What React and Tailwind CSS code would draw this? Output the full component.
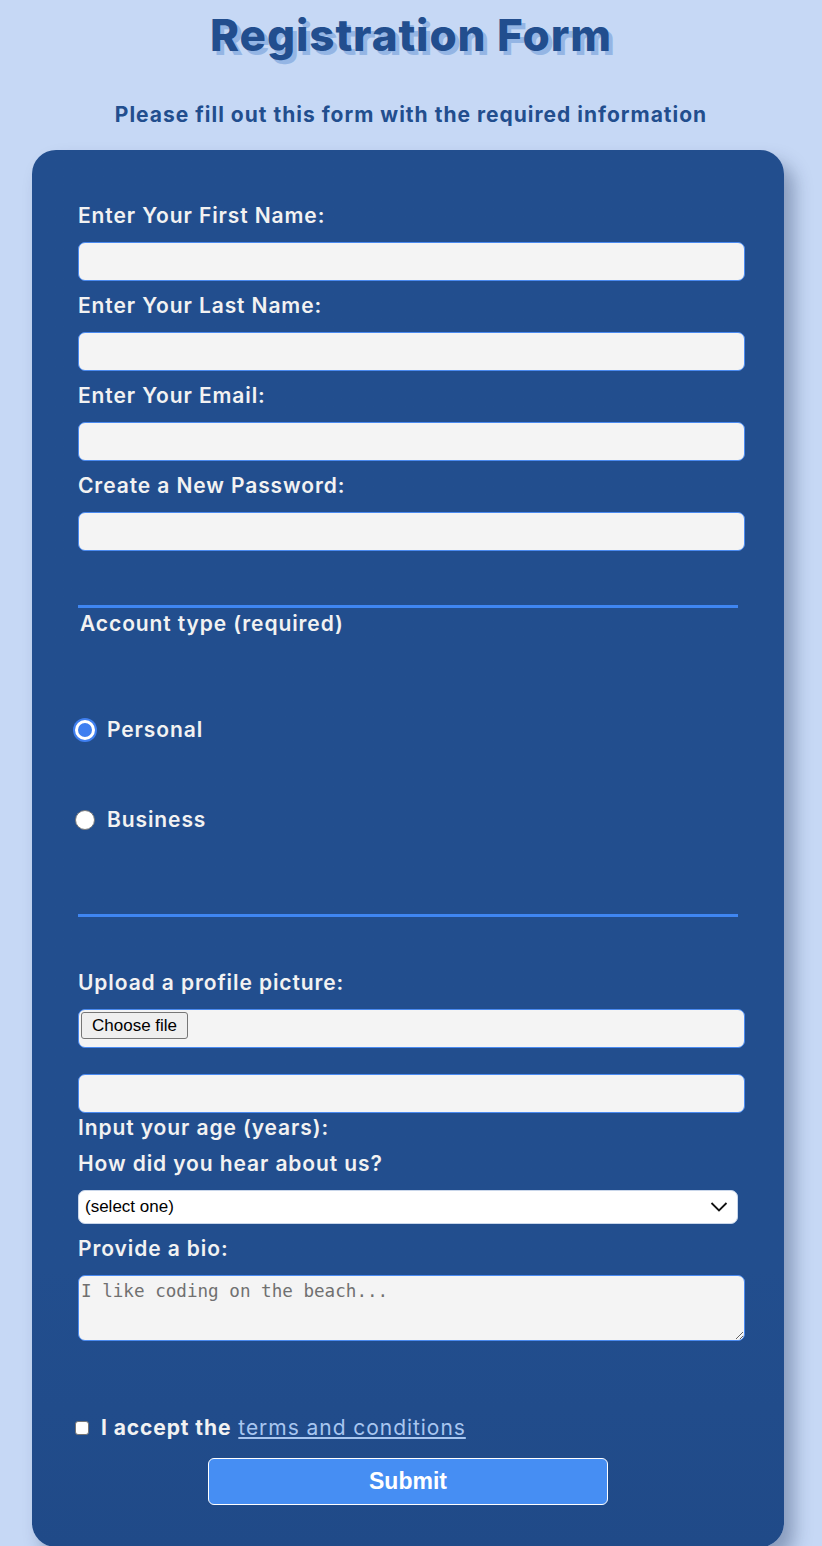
import { useState } from "react";

const font = { fontFamily: "Inter, 'Open Sans', sans-serif" };
const labelCls = "block leading-6 text-[21px] font-semibold text-[#f2f2f2] tracking-[0.9px]";
const boxCls = "block w-[667px] h-[39px] rounded-[7px] bg-[#f4f4f4] border border-[#4a8af0] outline-none px-2";

function Field({ label, type = "text" }) {
  return (
    <div>
      <label className={labelCls + " mt-[13px]"}>{label}</label>
      <input type={type} className={boxCls + " mt-[14px]"} />
    </div>
  );
}

function Radio({ checked, onClick }) {
  return (
    <button
      type="button"
      onClick={onClick}
      className={
        checked
          ? "w-[20px] h-[20px] rounded-full bg-[#3f7ff0] border-[3px] border-white ring-2 ring-[#3f7ff0]"
          : "w-[20px] h-[20px] rounded-full bg-white border-[1.5px] border-[#7a7a7a]"
      }
    />
  );
}

export default function App() {
  const [account, setAccount] = useState("personal");

  return (
    <div className="min-h-[1546px] bg-[#c6d8f5] flex flex-col items-center" style={font}>
      <h1 className="mt-[8px] text-[44px] leading-[54px] font-extrabold text-[#224e8e] tracking-[0.9px] [text-shadow:4px_4px_0_#94b5e4]">
        Registration Form
      </h1>
      <p className="mt-[41px] text-[21px] leading-6 font-bold text-[#224e8e] tracking-[1px]">
        Please fill out this form with the required information
      </p>

      <form
        onSubmit={(e) => e.preventDefault()}
        className="mt-[23px] w-[752px] self-start ml-[32px] bg-gradient-to-b from-[#224e8e] from-80% to-[#204a88] rounded-[24px] pl-[46px] pr-[39px] pt-[41px] pb-[42px] shadow-[10px_12px_18px_rgba(20,40,80,0.35)]"
      >
        <Field label="Enter Your First Name:" />
        <Field label="Enter Your Last Name:" />
        <Field label="Enter Your Email:" />
        <Field label="Create a New Password:" type="password" />

        <div className="mt-[54px] w-[660px] border-t-[3px] border-b-[3px] border-[#3f86f2]">
          <p className={labelCls + " ml-[2px] mt-[4px]"}>Account type (required)</p>
          <div className="mt-[82px] flex items-center gap-[12px] -ml-[3px] h-6">
            <Radio checked={account === "personal"} onClick={() => setAccount("personal")} />
            <span className="text-[21px] font-semibold text-[#f2f2f2] tracking-[0.9px]">Personal</span>
          </div>
          <div className="mt-[66px] flex items-center gap-[12px] -ml-[3px] h-6">
            <Radio checked={account === "business"} onClick={() => setAccount("business")} />
            <span className="text-[21px] font-semibold text-[#f2f2f2] tracking-[0.9px]">Business</span>
          </div>
          <div className="h-[82px]" />
        </div>

        <label className={labelCls + " mt-[54px]"}>Upload a profile picture:</label>
        <div className="mt-[14px] w-[667px] h-[39px] rounded-[7px] bg-[#f4f4f4] border border-[#4a8af0] flex items-start pt-[2px] pl-[2px]">
          <button
            type="button"
            className="h-[27px] px-[10px] bg-[#efefef] border border-[#767676] rounded-[3px] text-[17px] text-black leading-none"
            style={{ fontFamily: "'Liberation Sans', Arial, sans-serif" }}
          >
            Choose file
          </button>
        </div>

        <input type="number" className={boxCls + " mt-[26px]"} />
        <label className={labelCls + " mt-[3px]"}>Input your age (years):</label>
        <label className={labelCls + " mt-[12px]"}>How did you hear about us?</label>
        <div className="relative mt-[14px] w-[660px]">
          <select
            className="appearance-none block w-full h-[34px] rounded-[7px] bg-white border border-[#c9d6ea] px-[6px] text-[17px] text-black outline-none"
            style={{ fontFamily: "'Liberation Sans', Arial, sans-serif" }}
            defaultValue=""
          >
            <option value="">(select one)</option>
            <option>Friend</option>
            <option>Search engine</option>
            <option>Social media</option>
          </select>
          <svg className="absolute right-[10px] top-[11px] pointer-events-none" width="18" height="12" viewBox="0 0 18 12" fill="none">
            <path d="M1.5 2 L9 9.5 L16.5 2" stroke="#111" strokeWidth="1.8" />
          </svg>
        </div>

        <label className={labelCls + " mt-[13px]"}>Provide a bio:</label>
        <textarea
          placeholder="I like coding on the beach..."
          className="mt-[14px] block w-[667px] h-[66px] rounded-[7px] bg-[#f4f4f4] border border-[#4a8af0] outline-none px-[2px] py-[2px] placeholder:text-[#707070]"
          style={{ fontFamily: "'DejaVu Sans Mono', monospace", fontSize: "17.6px" }}
        />

        <div className="mt-[75px] flex items-center -ml-[3px] h-6">
          <input
            type="checkbox"
            className="appearance-none w-[14px] h-[14px] mr-[12px] bg-white border border-[#767676] rounded-[3px] checked:bg-[#3f7ff0]"
          />
          <span className="text-[21px] font-bold text-[#f2f2f2] tracking-[0.9px]">I accept the</span>
          <a href="#" className="ml-[7px] text-[21px] text-[#a8c6f0] underline tracking-[0.95px]">
            terms and conditions
          </a>
        </div>

        <div className="mt-[18px] pl-[130px]">
          <button
            type="submit"
            className="w-[400px] h-[47px] rounded-[6px] bg-[#468ef3] border border-white text-white text-[23px] font-bold"
            style={{ fontFamily: "'Liberation Sans', Arial, sans-serif" }}
          >
            Submit
          </button>
        </div>
      </form>
    </div>
  );
}
